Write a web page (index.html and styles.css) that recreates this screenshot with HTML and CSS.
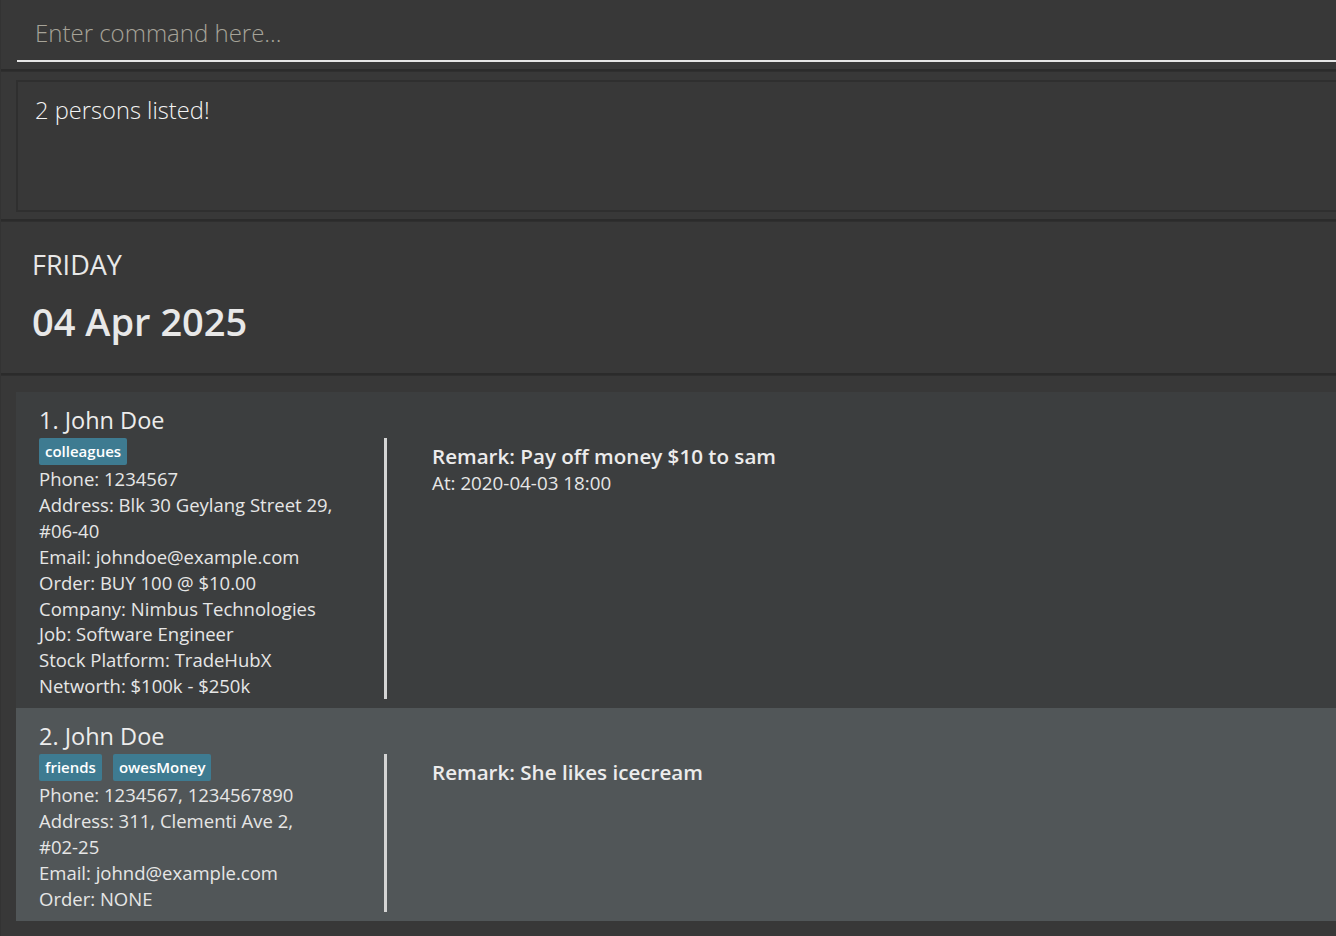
FILE: index.html
```html
<!DOCTYPE html>
<html lang="en">
<head>
<meta charset="utf-8">
<title>Address Book</title>
<link rel="stylesheet" href="styles.css">
</head>
<body>
<div class="app">
  <div class="command-box">
    <div class="command-field">Enter command here...</div>
  </div>
  <div class="split"></div>
  <div class="result-pane">
    <div class="result-box">2 persons listed!</div>
  </div>
  <div class="split"></div>
  <div class="date-pane">
    <div class="day">FRIDAY</div>
    <div class="date">04 Apr 2025</div>
  </div>
  <div class="split"></div>
  <div class="list">
    <div class="card">
      <div class="name">1. John Doe</div>
      <div class="card-body">
        <div class="info">
          <div class="tags"><span class="tag">colleagues</span></div>
          <div class="line">Phone: 1234567</div>
          <div class="line">Address: Blk 30 Geylang Street 29,<br>#06-40</div>
          <div class="line">Email: johndoe@example.com</div>
          <div class="line">Order: BUY 100 @ $10.00</div>
          <div class="line">Company: Nimbus Technologies</div>
          <div class="line">Job: Software Engineer</div>
          <div class="line">Stock Platform: TradeHubX</div>
          <div class="line">Networth: $100k - $250k</div>
        </div>
        <div class="vsep"></div>
        <div class="remarks">
          <div class="remark">Remark: Pay off money $10 to sam</div>
          <div class="at">At: 2020-04-03 18:00</div>
        </div>
      </div>
    </div>
    <div class="card selected">
      <div class="name">2. John Doe</div>
      <div class="card-body">
        <div class="info">
          <div class="tags"><span class="tag">friends</span><span class="tag">owesMoney</span></div>
          <div class="line">Phone: 1234567, 1234567890</div>
          <div class="line">Address: 311, Clementi Ave 2,<br>#02-25</div>
          <div class="line">Email: johnd@example.com</div>
          <div class="line">Order: NONE</div>
        </div>
        <div class="vsep"></div>
        <div class="remarks">
          <div class="remark">Remark: She likes icecream</div>
        </div>
      </div>
    </div>
  </div>
</div>
</body>
</html>
```

FILE: styles.css
```css
* { box-sizing: border-box; }
html, body {
  margin: 0;
  padding: 0;
  background: #383838;
  height: 100%;
}
body {
  font-family: "Open Sans", "Noto Sans", sans-serif;
  color: #ececec;
  overflow: hidden;
}
.app {
  display: flex;
  flex-direction: column;
  min-height: 936px;
  border-left: 1px solid #333333;
}
.command-box {
  height: 69px;
  padding: 0 0 0 16px;
  display: flex;
  flex-direction: column;
  justify-content: flex-end;
}
.command-field {
  height: 60px;
  padding: 16px 0 0 18px;
  border-bottom: 2px solid #e6e6e6;
  margin-bottom: 7px;
  font-size: 24px;
  font-weight: 300;
  color: #a6a398;
  line-height: 30px;
}
.split {
  height: 3px;
  background: #2b2b2b;
  border-bottom: 1px solid #2f2f2f;
}
.result-pane {
  height: 147px;
  padding: 8px 0 7px 15px;
}
.result-box {
  height: 100%;
  border: 2px solid #2f2f2f;
  border-right: none;
  padding: 13px 0 0 17px;
  font-size: 23.7px;
  font-weight: 300;
  color: #f4f4f4;
  line-height: 30px;
}
.date-pane {
  height: 151px;
  padding: 26px 0 0 31px;
  color: #e8e8e8;
}
.day {
  font-size: 27px;
  line-height: 34px;
}
.date {
  font-size: 38px;
  font-weight: 600;
  line-height: 50px;
  margin-top: 14px;
}
.list {
  padding: 16px 0 0 15px;
}
.card {
  background: #3c3e3f;
  padding: 10px 0 9px 23px;
}
.card.selected {
  background: #515658;
  padding-bottom: 9px;
}
.name {
  font-size: 23.5px;
  line-height: 36px;
  color: #ececec;
}
.card-body {
  display: flex;
  align-items: stretch;
}
.info {
  width: 345px;
  flex: none;
}
.tags {
  display: flex;
  gap: 11px;
  height: 28px;
  margin-bottom: 0;
}
.tag {
  background: #3e7b91;
  color: #ffffff;
  font-size: 15px;
  font-weight: 600;
  line-height: 27px;
  height: 27px;
  padding: 0 6px;
  border-radius: 2px;
}
.line {
  font-size: 18.5px;
  line-height: 25.9px;
  color: #e6e6e6;
  white-space: nowrap;
}
.vsep {
  width: 3px;
  flex: none;
  background: #d4d4d4;
}
.remarks {
  padding: 4px 0 0 45px;
}
.remark {
  font-size: 20.6px;
  font-weight: 600;
  line-height: 28px;
  color: #ececec;
}
.at {
  font-size: 18.8px;
  line-height: 26px;
  color: #e6e6e6;
}
```
